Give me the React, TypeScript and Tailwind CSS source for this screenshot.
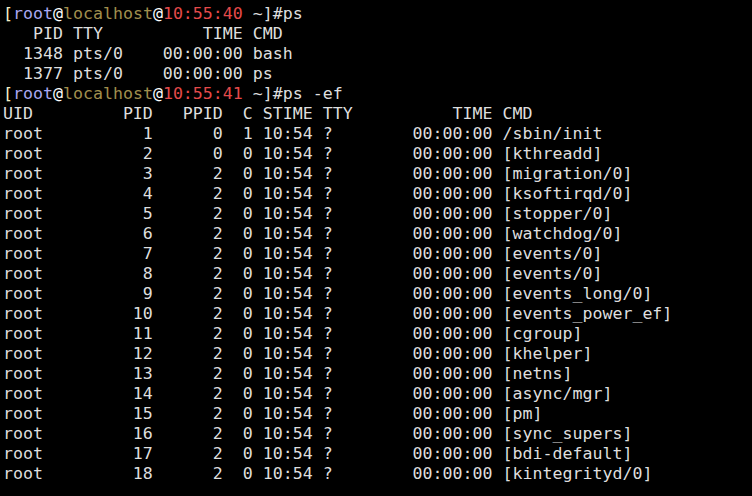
import React from 'react';

// column helpers for ps -ef rows
const padR = (s: string, n: number) => s + ' '.repeat(Math.max(0, n - s.length));
const padL = (s: string, n: number) => ' '.repeat(Math.max(0, n - s.length)) + s;

const procs: [string, string, string][] = [
  ['1', '0', '/sbin/init'],
  ['2', '0', '[kthreadd]'],
  ['3', '2', '[migration/0]'],
  ['4', '2', '[ksoftirqd/0]'],
  ['5', '2', '[stopper/0]'],
  ['6', '2', '[watchdog/0]'],
  ['7', '2', '[events/0]'],
  ['8', '2', '[events/0]'],
  ['9', '2', '[events_long/0]'],
  ['10', '2', '[events_power_ef]'],
  ['11', '2', '[cgroup]'],
  ['12', '2', '[khelper]'],
  ['13', '2', '[netns]'],
  ['14', '2', '[async/mgr]'],
  ['15', '2', '[pm]'],
  ['16', '2', '[sync_supers]'],
  ['17', '2', '[bdi-default]'],
  ['18', '2', '[kintegrityd/0]'],
];

function row(pid: string, ppid: string, cmd: string, c = '0') {
  return (
    padR('root', 10) +
    padL(pid, 5) +
    padL(ppid, 7) +
    padL(c, 3) +
    ' 10:54 ?        00:00:00 ' +
    cmd
  );
}

function Prompt({ time, cmd }: { time: string; cmd: string }) {
  return (
    <div>
      <span className="text-[#f2ecc8]">[</span>
      <span className="text-[#a9a8f2]">root</span>
      <span className="text-white">@</span>
      <span className="text-[#a08f4e]">localhost</span>
      <span className="text-white">@</span>
      <span className="text-[#e44a4a]">{time}</span>
      <span> ~]#{cmd}</span>
    </div>
  );
}

export default function App() {
  return (
    <div
      className="w-[752px] h-[496px] bg-black text-[#dedede] overflow-hidden pt-[4px] pl-[3px] whitespace-pre text-[16.6px] leading-[20px]"
      style={{ fontFamily: '"DejaVu Sans Mono", monospace' }}
    >
      <Prompt time="10:55:40" cmd="ps" />
      <div>{'   PID TTY          TIME CMD'}</div>
      <div>{'  1348 pts/0    00:00:00 bash'}</div>
      <div>{'  1377 pts/0    00:00:00 ps'}</div>
      <Prompt time="10:55:41" cmd="ps -ef" />
      <div>{'UID         PID   PPID  C STIME TTY          TIME CMD'}</div>
      {procs.map(([pid, ppid, cmd], i) => (
        <div key={i}>{row(pid, ppid, cmd, i === 0 ? '1' : '0')}</div>
      ))}
    </div>
  );
}
